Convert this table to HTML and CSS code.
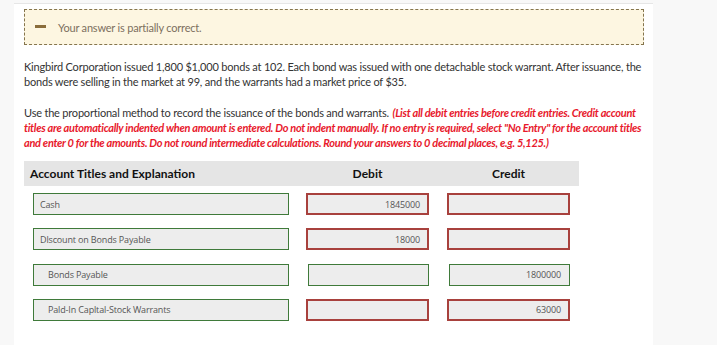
FILE: index.html
```html
<!DOCTYPE html>
<html>
<head>
<meta charset="utf-8">
<link rel="stylesheet" href="styles.css">
</head>
<body>
<div class="page">
  <div class="gutter"></div>
  <main class="main">
    <div class="feedback">
      <span class="minus"></span>
      <span class="feedback-text">Your answer is partially correct.</span>
    </div>
    <p class="para">Kingbird Corporation issued 1,800 $1,000 bonds at 102. Each bond was issued with one detachable stock warrant. After issuance, the bonds were selling in the market at 99, and the warrants had a market price of $35.</p>
    <p class="para para2">Use the proportional method to record the issuance of the bonds and warrants. <em class="note">(List all debit entries before credit entries. Credit account titles are automatically indented when amount is entered. Do not indent manually. If no entry is required, select "No Entry" for the account titles and enter 0 for the amounts. Do not round intermediate calculations. Round your answers to 0 decimal places, e.g. 5,125.)</em></p>
    <div class="journal">
      <div class="head head-account">Account Titles and Explanation</div>
      <div class="head head-num">Debit</div>
      <div class="head head-num">Credit</div>

      <div class="cell"><div class="field ok acct">Cash</div></div>
      <div class="cell num-cell"><div class="field bad num">1845000</div></div>
      <div class="cell num-cell"><div class="field bad num"></div></div>

      <div class="cell"><div class="field ok acct">Dlscount on Bonds Payable</div></div>
      <div class="cell num-cell"><div class="field bad num">18000</div></div>
      <div class="cell num-cell"><div class="field bad num"></div></div>

      <div class="cell"><div class="field ok acct indent">Bonds Payable</div></div>
      <div class="cell num-cell"><div class="field ok num"></div></div>
      <div class="cell num-cell"><div class="field ok num">1800000</div></div>

      <div class="cell"><div class="field ok acct indent">Pald-In Capltal-Stock Warrants</div></div>
      <div class="cell num-cell"><div class="field bad num"></div></div>
      <div class="cell num-cell"><div class="field bad num">63000</div></div>
    </div>
  </main>
  <div class="side"></div>
</div>
</body>
</html>
```

FILE: styles.css
```css
html, body {
  margin: 0;
  padding: 0;
  background: #f8f8f8;
}

.page {
  display: flex;
  width: 717px;
  height: 345px;
  overflow: hidden;
  font-family: Lato, "Liberation Sans", sans-serif;
}

.gutter {
  width: 14px;
  flex: none;
  background: #f8f8f8;
}

.main {
  width: 639px;
  flex: none;
  background: #fff;
  border-top: 1px solid #e6e6e6;
  margin-top: 3px;
  padding: 5px 9px 0 10px;
  box-sizing: border-box;
}

.side {
  flex: 1;
  background: #f8f8f8;
}

.feedback {
  height: 36px;
  box-sizing: border-box;
  border: 1px dashed #85754d;
  background: #fdf6e1;
  display: flex;
  align-items: center;
  padding-left: 10px;
}

.minus {
  width: 11px;
  height: 3px;
  background: #8a6d3b;
  margin-right: 12px;
  margin-top: -2px;
}

.feedback-text {
  font-size: 11px;
  letter-spacing: -0.2px;
  color: #7c6f5e;
}

.para {
  margin: 15px 0 0 0;
  font-size: 11px;
  letter-spacing: -0.2px;
  line-height: 14.5px;
  color: #333;
}

.para2 {
  margin-top: 16px;
  line-height: 15px;
}

.note {
  color: #e8192c;
  font-weight: bold;
  letter-spacing: -0.3px;
  padding-left: 1px;
}

.journal {
  display: grid;
  width: 555px;
  grid-template-columns: 273px 141px 141px;
  grid-template-rows: 32px repeat(4, 35.33px);
  margin-top: 11px;
}

.head {
  background: #e5e5e5;
  height: 25px;
  line-height: 25px;
  font-size: 12px;
  font-weight: bold;
  color: #111;
}

.head-account {
  padding-left: 6px;
}

.head-num {
  text-align: center;
}

.cell {
  display: flex;
  align-items: flex-start;
  padding-left: 9px;
}

.field {
  height: 22px;
  box-sizing: border-box;
  background: #ededed;
  font-family: "Open Sans", "DejaVu Sans", sans-serif;
  font-size: 9px;
  letter-spacing: -0.15px;
  color: #555;
  display: flex;
  align-items: center;
}

.acct {
  width: 256px;
  padding-left: 6px;
}

.indent {
  padding-left: 14px;
}

.num {
  width: 123px;
  justify-content: flex-end;
  padding-right: 7px;
}

.ok {
  border: 1px solid #3f7a3a;
}

.ok.num {
  width: 121px;
  margin-left: 2px;
  padding-right: 8px;
}

.bad {
  border: 2px solid #a8413d;
}
```
